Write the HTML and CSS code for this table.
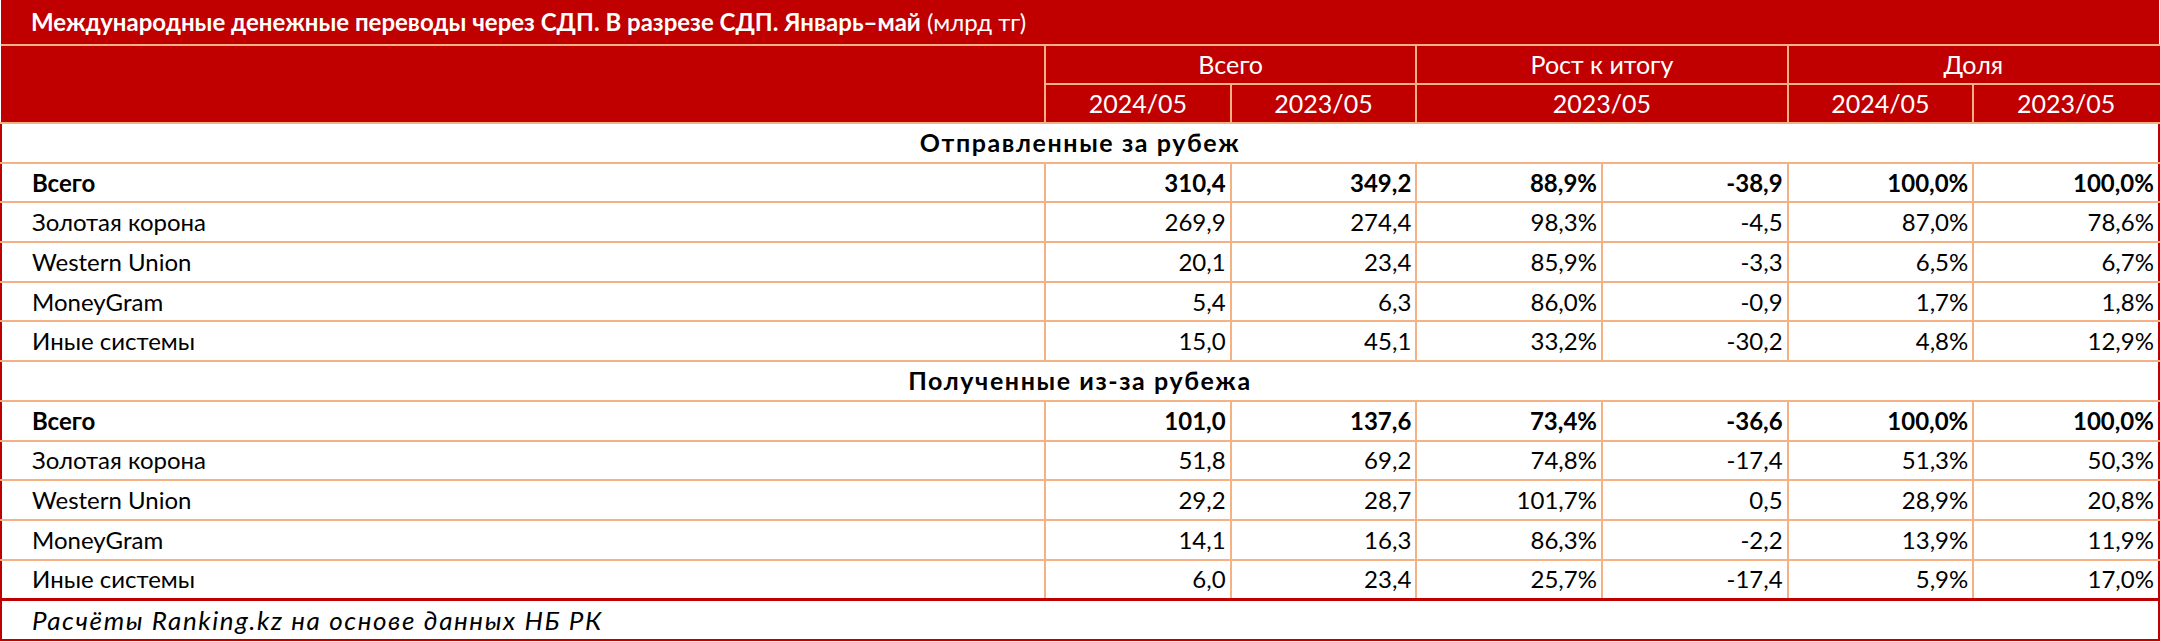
FILE: index.html
```html
<!DOCTYPE html>
<html lang="ru">
<head>
<meta charset="utf-8">
<title>Международные денежные переводы через СДП</title>
<link rel="stylesheet" href="styles.css">
</head>
<body>
<table class="tbl">
  <colgroup>
    <col class="c-label">
    <col class="c-num"><col class="c-num"><col class="c-num"><col class="c-num"><col class="c-num"><col class="c-num">
  </colgroup>
  <thead>
    <tr class="r-title">
      <th colspan="7" class="title"><b>Международные денежные переводы через СДП. В разрезе СДП. Январь–май</b> (млрд тг)</th>
    </tr>
    <tr class="r-head">
      <th rowspan="2" class="h-blank"></th>
      <th colspan="2">Всего</th>
      <th colspan="2">Рост к итогу</th>
      <th colspan="2">Доля</th>
    </tr>
    <tr class="r-head">
      <th>2024/05</th>
      <th>2023/05</th>
      <th colspan="2">2023/05</th>
      <th>2024/05</th>
      <th>2023/05</th>
    </tr>
  </thead>
  <tbody>
    <tr class="sec"><td colspan="7">Отправленные за рубеж</td></tr>
    <tr class="total"><td>Всего</td><td>310,4</td><td>349,2</td><td>88,9%</td><td>-38,9</td><td>100,0%</td><td>100,0%</td></tr>
    <tr><td>Золотая корона</td><td>269,9</td><td>274,4</td><td>98,3%</td><td>-4,5</td><td>87,0%</td><td>78,6%</td></tr>
    <tr><td>Western Union</td><td>20,1</td><td>23,4</td><td>85,9%</td><td>-3,3</td><td>6,5%</td><td>6,7%</td></tr>
    <tr><td>MoneyGram</td><td>5,4</td><td>6,3</td><td>86,0%</td><td>-0,9</td><td>1,7%</td><td>1,8%</td></tr>
    <tr><td>Иные системы</td><td>15,0</td><td>45,1</td><td>33,2%</td><td>-30,2</td><td>4,8%</td><td>12,9%</td></tr>
    <tr class="sec"><td colspan="7">Полученные из-за рубежа</td></tr>
    <tr class="total"><td>Всего</td><td>101,0</td><td>137,6</td><td>73,4%</td><td>-36,6</td><td>100,0%</td><td>100,0%</td></tr>
    <tr><td>Золотая корона</td><td>51,8</td><td>69,2</td><td>74,8%</td><td>-17,4</td><td>51,3%</td><td>50,3%</td></tr>
    <tr><td>Western Union</td><td>29,2</td><td>28,7</td><td>101,7%</td><td>0,5</td><td>28,9%</td><td>20,8%</td></tr>
    <tr><td>MoneyGram</td><td>14,1</td><td>16,3</td><td>86,3%</td><td>-2,2</td><td>13,9%</td><td>11,9%</td></tr>
    <tr class="last"><td>Иные системы</td><td>6,0</td><td>23,4</td><td>25,7%</td><td>-17,4</td><td>5,9%</td><td>17,0%</td></tr>
    <tr class="foot"><td colspan="7">Расчёты Ranking.kz на основе данных НБ РК</td></tr>
  </tbody>
</table>
</body>
</html>
```

FILE: styles.css
```css
html, body {
  margin: 0;
  padding: 0;
  background: #ffffff;
}

body {
  font-family: Lato, "Open Sans", "Noto Sans", sans-serif;
  color: #000000;
}

.tbl {
  width: 2158px;
  border-collapse: collapse;
  table-layout: fixed;
}

.c-label { width: 1044px; }
.c-num { width: 185.67px; }

.tbl th,
.tbl td {
  padding: 0;
  font-size: 24px;
  line-height: 1;
  overflow: hidden;
  white-space: nowrap;
}

/* title */
.r-title .title {
  height: 44px;
  background: #c00000;
  color: #ffffff;
  text-align: left;
  padding-left: 30px;
  font-weight: 400;
  border-bottom: 2px solid #f4b183;
}

/* header rows */
.r-head th {
  height: 37px;
  background: #c00000;
  color: #ffffff;
  font-weight: 400;
  font-size: 25px;
  text-align: center;
  border: 2px solid #f4b183;
}

.r-head .h-blank {
  border-left: 0;
  border-bottom: 2px solid #f4b183;
}

.r-head th:last-child { border-right-color: #c00000; }

/* body */
.tbl tbody td {
  height: 37.7px;
  border: 2px solid #f4b183;
  text-align: right;
  padding-right: 4px;
}

.tbl tbody td:first-child {
  text-align: left;
  padding-left: 30px;
  border-left: 2px solid #c00000;
}

.tbl tbody td:last-child { border-right: 2px solid #c00000; }

.tbl tbody .sec td {
  text-align: center;
  font-weight: 700;
  font-size: 25px;
  letter-spacing: 1.6px;
  padding: 0;
  border-left: 2px solid #c00000;
  border-right: 2px solid #c00000;
}

.tbl tbody .total td { font-weight: 700; }

.tbl tbody .last td { border-bottom: 3px solid #c00000; }

.tbl tbody .foot td {
  font-style: italic;
  font-size: 26px;
  letter-spacing: 1.6px;
  text-align: left;
  padding-left: 30px;
  border: 2px solid #c00000;
  border-top: 3px solid #c00000;
}
```
